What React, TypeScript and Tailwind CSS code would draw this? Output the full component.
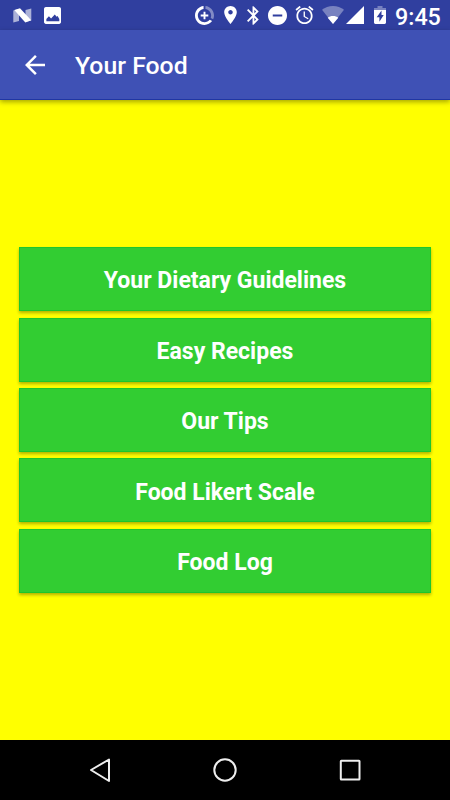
const items = [
  "Your Dietary Guidelines",
  "Easy Recipes",
  "Our Tips",
  "Food Likert Scale",
  "Food Log",
];

const StatusBar = () => {
  return (
    <div className="h-[30px] shrink-0 bg-[#303f9f] flex items-center text-white fill-current">
      <svg className="ml-[13px] w-[19px] h-[15px]" viewBox="0 0 19 15">
        <path d="M.3 2.500 6 1v12L.3 14.500zM12.500 2 18.300.5v12l-5.800 1.500z" opacity=".6" />
        <path d="M1.300 2 7 .3 18.200 12.300l-5.900 2.100z" />
      </svg>
      <svg className="ml-3 w-[17px] h-[17px]" viewBox="3 3 18 18">
        <path d="M21 19V5c0-1.1-.9-2-2-2H5c-1.1 0-2 .9-2 2v14c0 1.1.9 2 2 2h14c1.1 0 2-.9 2-2z" />
        <path
          className="fill-[#303f9f]"
          d="M5.5 18v-2.4l2.7-2.8 2.3 2.4 3.9-4.3 2 2.5 1-1 1.8 3.2V18z"
        />
      </svg>
      <svg className="ml-[133.5px] w-[19px] h-[19px]" viewBox="2 2 20 20">
        <path
          opacity=".4"
          d="M13 2.05v3.03c3.39.49 6 3.39 6 6.92 0 .9-.18 1.75-.48 2.54l2.6 1.53c.56-1.24.88-2.62.88-4.07 0-5.18-3.95-9.45-9-9.95z"
        />
        <path d="M12 19c-3.87 0-7-3.13-7-7 0-3.53 2.61-6.43 6-6.92V2.05c-5.06.5-9 4.76-9 9.95 0 5.52 4.47 10 9.99 10 3.31 0 6.24-1.61 8.06-4.09l-2.6-1.53C16.17 17.98 14.21 19 12 19z" />
        <path d="M13 8h-2v3H8v2h3v3h2v-3h3v-2h-3z" />
      </svg>
      <svg className="ml-[10.5px] w-[13px] h-[18px]" viewBox="5 2 14 20">
        <path d="M12 2C8.13 2 5 5.13 5 9c0 5.25 7 13 7 13s7-7.75 7-13c0-3.87-3.13-7-7-7zm0 9.5c-1.38 0-2.5-1.12-2.5-2.5s1.12-2.5 2.5-2.5 2.5 1.12 2.5 2.5-1.12 2.5-2.5 2.5z" />
      </svg>
      <svg className="ml-[9.5px] w-3 h-[19px]" viewBox="5 2 13 20">
        <path d="M17.71 7.71L12 2h-1v7.59L6.41 5 5 6.41 10.59 12 5 17.59 6.41 19 11 14.41V22h1l5.71-5.71-4.3-4.29 4.3-4.29zM13 5.83l1.88 1.88L13 9.59V5.83zm1.88 10.46L13 18.17v-3.76l1.88 1.88z" />
      </svg>
      <svg className="ml-[9.5px] w-[19px] h-[19px]" viewBox="2 2 20 20">
        <path d="M12 2C6.48 2 2 6.48 2 12s4.48 10 10 10 10-4.48 10-10S17.52 2 12 2zm5 11H7v-2h10v2z" />
      </svg>
      <svg className="ml-2 w-[19px] h-[18px]" viewBox="2 2 20 20">
        <path d="M22 5.72l-4.6-3.86-1.29 1.53 4.6 3.86L22 5.72zM7.88 3.39L6.6 1.86 2 5.71l1.29 1.53 4.59-3.85zM12.5 8H11v6l4.75 2.85.75-1.23-4-2.37V8zM12 4c-4.97 0-9 4.03-9 9s4.02 9 9 9c4.97 0 9-4.03 9-9s-4.03-9-9-9zm0 16c-3.87 0-7-3.13-7-7s3.13-7 7-7 7 3.13 7 7-3.13 7-7 7z" />
      </svg>
      <svg className="ml-2 w-[22px] h-[18px]" viewBox="0 0 22 18">
        <path opacity=".35" d="M11 0C6.8 0 3 1.400 0 3.800L11 17.700 22 3.800C19 1.400 15.200 0 11 0z" />
        <path d="M11 10c-2 0-3.900.7-5.300 1.700L11 17.900l5.300-6.200C14.900 10.700 13 10 11 10z" />
      </svg>
      <svg className="ml-[2px] w-[18px] h-[18px]" viewBox="0 0 18 18">
        <path d="M0 18h18V0z" />
      </svg>
      <svg className="ml-[10px] w-3 h-[18px]" viewBox="0 0 12 18">
        <path opacity=".35" d="M3.500 0h5v2H12v2H0V2h3.500z" />
        <path d="M0 4v12.600c0 .8.600 1.400 1.400 1.400h9.200c.8 0 1.400-.6 1.400-1.400V4z" />
        <path className="fill-[#303f9f]" d="M7.500 4.500 2.700 11.300h2.700v4.500L9.700 9H7.500z" />
      </svg>
      <span className="ml-[9px] mt-[5px] text-[23.3px] leading-none font-medium whitespace-nowrap">
        9:45
      </span>
    </div>
  );
};

const AppBar = () => {
  return (
    <header className="relative h-[70px] shrink-0 bg-[#3f51b5] border-b border-[#2036a3] flex items-center text-white shadow-[0_2px_5px_rgba(0,0,0,0.35)]">
      <svg className="ml-[25px] w-5 h-5 fill-current" viewBox="4 4 16 16">
        <path d="M20 11H7.830l5.590-5.590L12 4l-8 8 8 8 1.410-1.410L7.830 13H20v-2z" />
      </svg>
      <h1 className="ml-[30px] mt-[3px] text-[24.8px] leading-none font-medium">
        Your Food
      </h1>
    </header>
  );
};

const NavBar = () => {
  return (
    <nav className="h-[60px] shrink-0 bg-black flex items-center">
      <svg
        className="w-full h-[60px] fill-none stroke-[#eeeeee] stroke-2"
        viewBox="0 0 450 60"
      >
        <path strokeLinejoin="round" d="M109 19.500v21.500L91 30z" />
        <circle cx="225" cy="30" r="10.700" />
        <rect x="340.800" y="20.800" width="18.700" height="18.700" rx=".5" />
      </svg>
    </nav>
  );
};

const App = () => {
  return (
    <div className="w-full h-screen flex flex-col bg-[#ffff00] font-[Roboto,sans-serif]">
      <StatusBar />
      <AppBar />
      <main className="flex-1 flex flex-col justify-center gap-[6.4px] px-[19px]">
        {items.map((item) => (
          <button
            key={item}
            className="h-16 pt-[3.5px] bg-[#32cd32] border border-[#1cc72c] text-white text-[23px] leading-none font-bold shadow-[0_2px_3px_rgba(0,0,0,0.3)]"
          >
            {item}
          </button>
        ))}
      </main>
      <NavBar />
    </div>
  );
};

export default App;
